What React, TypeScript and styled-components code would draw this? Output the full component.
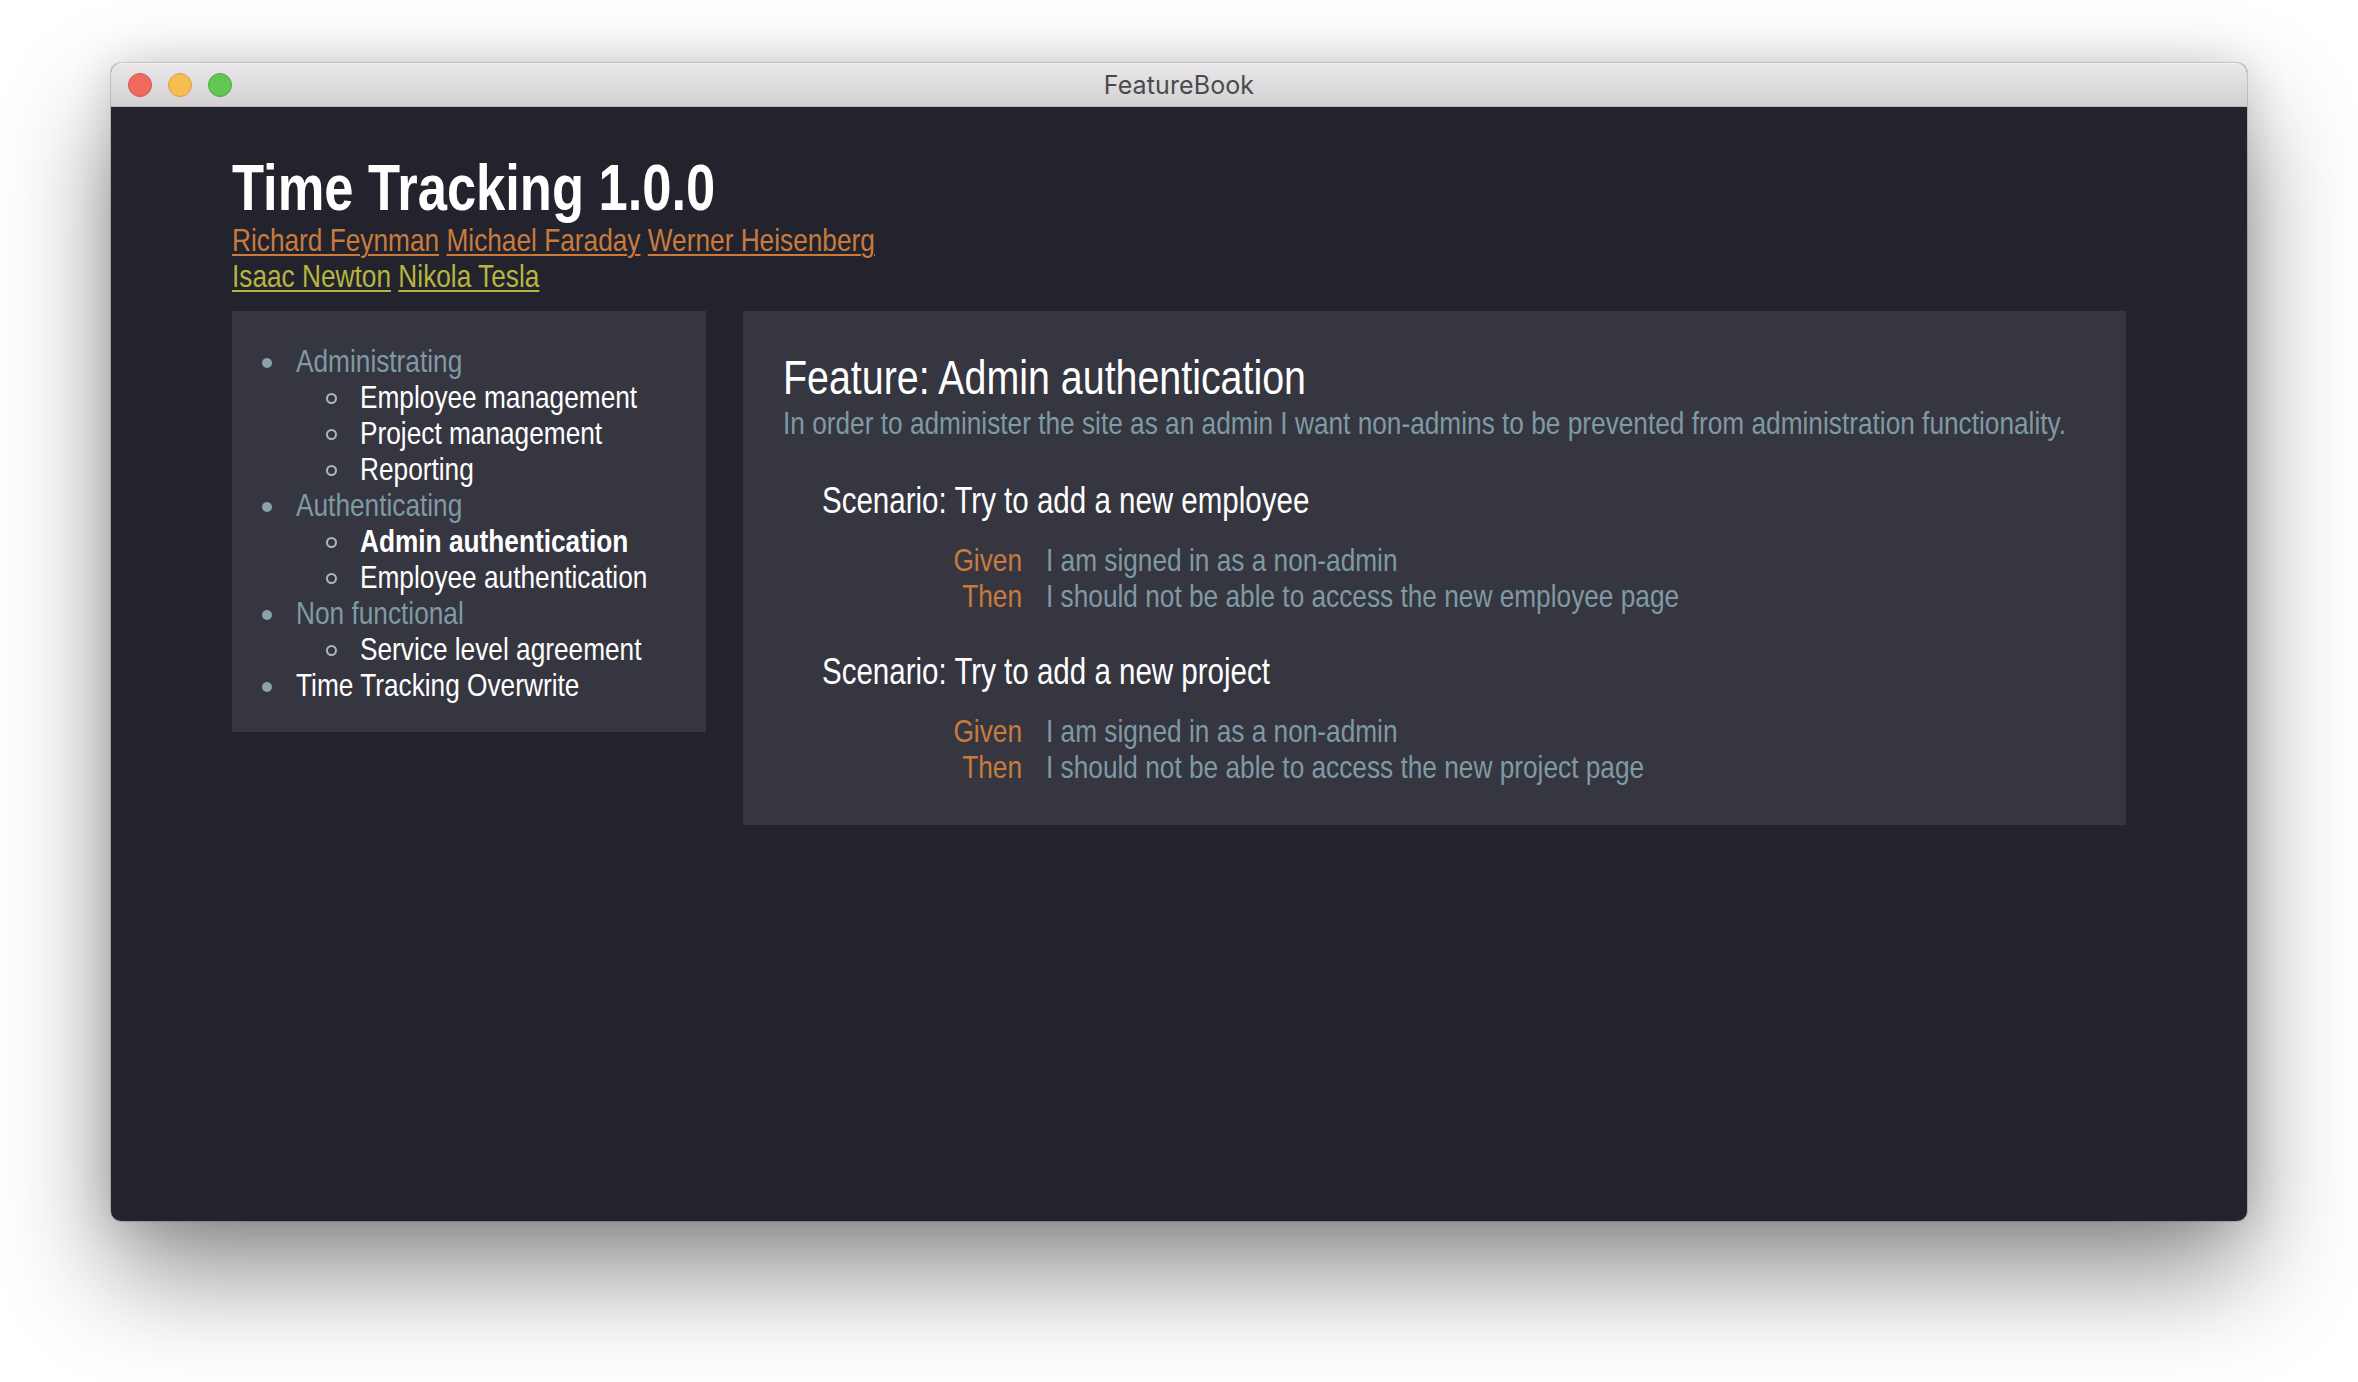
import React from "react";
import styled, { createGlobalStyle } from "styled-components";

const CONTENT_FONT = `"Liberation Sans", Arial, sans-serif`;
const NARROW = 0.82;

const GlobalStyle = createGlobalStyle`
  html, body {
    margin: 0;
    padding: 0;
    background: #ffffff;
  }
  body {
    width: 2358px;
    height: 1382px;
    overflow: hidden;
  }
  * { box-sizing: border-box; }
`;

const Stage = styled.div`
  width: 2358px;
  height: 1382px;
  padding: 63px 111px 0 111px;
  background: #ffffff;
`;

const Window = styled.div`
  width: 2136px;
  height: 1158px;
  border-radius: 10px;
  overflow: hidden;
  display: flex;
  flex-direction: column;
  background: #23232d;
  box-shadow: 0 52px 110px rgba(0, 0, 0, 0.45), 0 0 44px rgba(0, 0, 0, 0.14),
    0 0 0 1px rgba(0, 0, 0, 0.14);
`;

const TitleBar = styled.div`
  height: 44px;
  flex: none;
  display: grid;
  grid-template-columns: 1fr auto 1fr;
  align-items: center;
  padding: 0 17px;
  background: linear-gradient(#e9e7e9, #d3d1d3);
  border-bottom: 1px solid #b8b6b8;
  box-shadow: inset 0 1px 0 #f3f2f3;
`;

const Lights = styled.div`
  display: flex;
  gap: 16px;
  align-items: center;
`;

const Light = styled.span<{ $fill: string; $edge: string }>`
  width: 24px;
  height: 24px;
  border-radius: 50%;
  background: ${(p) => p.$fill};
  border: 1px solid ${(p) => p.$edge};
`;

const WindowTitle = styled.div`
  font-family: "Inter", "Liberation Sans", sans-serif;
  font-size: 25px;
  color: #4b4a4b;
  letter-spacing: 0.1px;
`;

const Content = styled.main`
  flex: 1;
  padding: 47px 121px 0 121px;
  font-family: ${CONTENT_FONT};
  font-size: 32px;
  color: #ffffff;
`;

/* condensed rendering of the narrow sans used by the page */
const narrow = (origin: "left" | "right" = "left") => `
  transform: scaleX(${NARROW});
  transform-origin: ${origin} center;
  white-space: nowrap;
`;

const PageTitle = styled.h1`
  margin: 0;
  font-size: 64px;
  line-height: 68px;
  font-weight: 700;
  color: #ffffff;
  ${narrow()}
`;

const Authors = styled.div`
  ${narrow()}
`;

const AuthorLine = styled.div`
  line-height: 36px;
  display: flex;
  gap: 9px;
`;

const Author = styled.a<{ $tone: "orange" | "olive" }>`
  color: ${(p) => (p.$tone === "orange" ? "#c87b3d" : "#b6b53f")};
  text-decoration: underline;
  text-decoration-thickness: 2px;
  text-underline-offset: 3px;
  cursor: pointer;
`;

const Columns = styled.div`
  margin-top: 17px;
  display: grid;
  grid-template-columns: 25% 73%;
  justify-content: space-between;
  align-items: start;
`;

const Sidebar = styled.nav`
  background: #363640;
  padding: 32px 0 29px 0;
`;

const NavList = styled.ul`
  list-style: none;
  margin: 0;
  padding: 0 0 0 30px;
`;

const SubList = styled.ul`
  list-style: none;
  margin: 0;
  padding: 0 0 0 64px;
`;

const NavItem = styled.li`
  margin: 0;
`;

const NavRow = styled.div`
  display: flex;
  align-items: flex-start;
  line-height: 36px;
`;

const Bullet = styled.span<{ $kind: "disc" | "circle" }>`
  flex: none;
  border-radius: 50%;
  ${(p) =>
    p.$kind === "disc"
      ? `width: 10px; height: 10px; margin: 15px 24px 0 0; background: #8aa2aa;`
      : `width: 11px; height: 11px; margin: 14px 23px 0 0; border: 2px solid #a9b9bf;`}
`;

const NavLabel = styled.span<{ $tone: "category" | "feature"; $active?: boolean }>`
  display: inline-block;
  color: ${(p) => (p.$tone === "category" ? "#7f9aa3" : "#ffffff")};
  font-weight: ${(p) => (p.$active ? 700 : 400)};
  ${narrow()}
`;

const FeaturePanel = styled.section`
  background: #363640;
  padding: 40px 40px 40px 40px;
`;

const FeatureTitle = styled.h2`
  margin: 0;
  font-size: 48px;
  line-height: 54px;
  font-weight: 400;
  color: #ffffff;
  ${narrow()}
`;

const Description = styled.p`
  margin: 0;
  line-height: 36px;
  color: #7f9aa3;
  ${narrow()}
`;

const Scenario = styled.div<{ $first?: boolean }>`
  margin: ${(p) => (p.$first ? "38px" : "36px")} 0 0 39px;
`;

const ScenarioTitle = styled.h3`
  margin: 0 0 19px 0;
  font-size: 36px;
  line-height: 44px;
  font-weight: 400;
  color: #ffffff;
  ${narrow()}
`;

const Steps = styled.div`
  display: grid;
  grid-template-columns: 200px 1fr;
  column-gap: 24px;
  line-height: 36px;
`;

const Keyword = styled.span`
  text-align: right;
  color: #c87b3d;
  ${narrow("right")}
`;

const StepText = styled.span`
  color: #7f9aa3;
  ${narrow()}
`;

type Step = { keyword: string; text: string };

const scenarios: { title: string; steps: Step[] }[] = [
  {
    title: "Scenario: Try to add a new employee",
    steps: [
      { keyword: "Given", text: "I am signed in as a non-admin" },
      { keyword: "Then", text: "I should not be able to access the new employee page" },
    ],
  },
  {
    title: "Scenario: Try to add a new project",
    steps: [
      { keyword: "Given", text: "I am signed in as a non-admin" },
      { keyword: "Then", text: "I should not be able to access the new project page" },
    ],
  },
];

type NavNode = { label: string; children?: { label: string; active?: boolean }[]; leaf?: boolean };

const nav: NavNode[] = [
  {
    label: "Administrating",
    children: [
      { label: "Employee management" },
      { label: "Project management" },
      { label: "Reporting" },
    ],
  },
  {
    label: "Authenticating",
    children: [
      { label: "Admin authentication", active: true },
      { label: "Employee authentication" },
    ],
  },
  {
    label: "Non functional",
    children: [{ label: "Service level agreement" }],
  },
  { label: "Time Tracking Overwrite", leaf: true },
];

export default function App() {
  return (
    <>
      <GlobalStyle />
      <Stage>
        <Window>
          <TitleBar>
            <Lights>
              <Light $fill="#ee6a5f" $edge="#d5544b" />
              <Light $fill="#f6be50" $edge="#d9a13f" />
              <Light $fill="#62c655" $edge="#4faa3f" />
            </Lights>
            <WindowTitle>FeatureBook</WindowTitle>
            <span />
          </TitleBar>
          <Content>
            <PageTitle>Time Tracking 1.0.0</PageTitle>
            <Authors>
              <AuthorLine>
                <Author $tone="orange">Richard Feynman</Author>
                <Author $tone="orange">Michael Faraday</Author>
                <Author $tone="orange">Werner Heisenberg</Author>
              </AuthorLine>
              <AuthorLine>
                <Author $tone="olive">Isaac Newton</Author>
                <Author $tone="olive">Nikola Tesla</Author>
              </AuthorLine>
            </Authors>
            <Columns>
              <Sidebar>
                <NavList>
                  {nav.map((n) => (
                    <NavItem key={n.label}>
                      <NavRow>
                        <Bullet $kind="disc" />
                        <NavLabel $tone={n.leaf ? "feature" : "category"}>{n.label}</NavLabel>
                      </NavRow>
                      {n.children && (
                        <SubList>
                          {n.children.map((c) => (
                            <NavItem key={c.label}>
                              <NavRow>
                                <Bullet $kind="circle" />
                                <NavLabel $tone="feature" $active={c.active}>
                                  {c.label}
                                </NavLabel>
                              </NavRow>
                            </NavItem>
                          ))}
                        </SubList>
                      )}
                    </NavItem>
                  ))}
                </NavList>
              </Sidebar>
              <FeaturePanel>
                <FeatureTitle>Feature: Admin authentication</FeatureTitle>
                <Description>
                  In order to administer the site as an admin I want non-admins to be prevented from
                  administration functionality.
                </Description>
                {scenarios.map((s, i) => (
                  <Scenario key={s.title} $first={i === 0}>
                    <ScenarioTitle>{s.title}</ScenarioTitle>
                    <Steps>
                      {s.steps.map((st) => (
                        <React.Fragment key={st.keyword + st.text}>
                          <Keyword>{st.keyword}</Keyword>
                          <StepText>{st.text}</StepText>
                        </React.Fragment>
                      ))}
                    </Steps>
                  </Scenario>
                ))}
              </FeaturePanel>
            </Columns>
          </Content>
        </Window>
      </Stage>
    </>
  );
}
